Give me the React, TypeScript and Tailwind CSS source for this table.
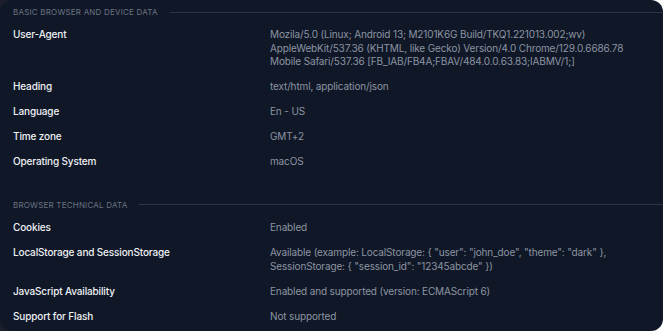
import React from 'react';

type Row = { label: string; value: string[] };

const basicRows: Row[] = [
  {
    label: 'User-Agent',
    value: [
      'Mozila/5.0 (Linux; Android 13; M2101K6G Build/TKQ1.221013.002;wv)',
      'AppleWebKit/537.36 (KHTML, like Gecko) Version/4.0 Chrome/129.0.6686.78',
      'Mobile Safari/537.36 [FB_IAB/FB4A;FBAV/484.0.0.63.83;IABMV/1;]',
    ],
  },
  { label: 'Heading', value: ['text/html, application/json'] },
  { label: 'Language', value: ['En - US'] },
  { label: 'Time zone', value: ['GMT+2'] },
  { label: 'Operating System', value: ['macOS'] },
];

const techRows: Row[] = [
  { label: 'Cookies', value: ['Enabled'] },
  {
    label: 'LocalStorage and SessionStorage',
    value: [
      'Available (example: LocalStorage: { "user": "john_doe", "theme": "dark" },',
      'SessionStorage: { "session_id": "12345abcde" })',
    ],
  },
  { label: 'JavaScript Availability', value: ['Enabled and supported (version: ECMAScript 6)'] },
  { label: 'Support for Flash', value: ['Not supported'] },
];

function SectionTitle({ title }: { title: string }) {
  return (
    <div className="flex items-center gap-3 pl-[13px]">
      <span className="text-[8px] leading-[12px] tracking-[0.2px] uppercase text-[#6b7383] whitespace-nowrap">
        {title}
      </span>
      <div className="h-px flex-1 bg-[#2a3446]" />
    </div>
  );
}

function DataRow({ row }: { row: Row }) {
  return (
    <div className="flex px-[13px]">
      <div className="w-[257px] shrink-0 text-[10px] tracking-[-0.15px] leading-[15px] font-medium text-[#eef0f4]">
        {row.label}
      </div>
      <div className="py-[1px] text-[10px] tracking-[-0.14px] leading-[13.5px] text-[#8d94a1]">
        {row.value.map(line => (
          <div key={line}>{line}</div>
        ))}
      </div>
    </div>
  );
}

export default function App() {
  return (
    <div className="w-[663px] h-[331px] bg-[linear-gradient(to_right,#1c1f2b_50%,#ffffff_50%)] font-['Inter',sans-serif]">
      <div className="w-full h-full rounded-[12px] bg-[#101828] pt-[6px] overflow-hidden">
        <SectionTitle title="Basic browser and device data" />
        <div className="flex flex-col gap-[9.5px] mt-[9px]">
          {basicRows.map(row => (
            <DataRow key={row.label} row={row} />
          ))}
        </div>
        <div className="mt-[29px]">
          <SectionTitle title="Browser technical data" />
        </div>
        <div className="flex flex-col gap-[9.5px] mt-[9.5px]">
          {techRows.map(row => (
            <DataRow key={row.label} row={row} />
          ))}
        </div>
      </div>
    </div>
  );
}
